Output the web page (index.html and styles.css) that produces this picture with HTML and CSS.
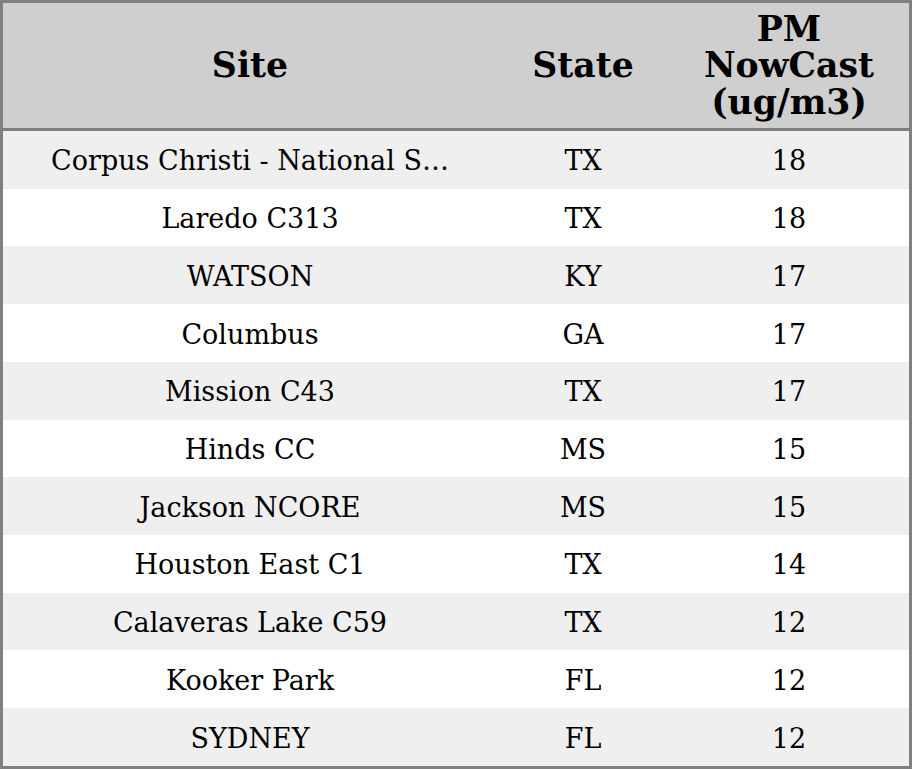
FILE: index.html
```html
<!DOCTYPE html>
<html>
<head>
<meta charset="utf-8">
<link rel="stylesheet" href="styles.css">
</head>
<body>
<table class="aq-table">
  <colgroup>
    <col class="col-site">
    <col class="col-state">
    <col class="col-pm">
  </colgroup>
  <thead>
    <tr class="head-row">
      <th>Site</th>
      <th>State</th>
      <th>PM<br>NowCast<br>(ug/m3)</th>
    </tr>
  </thead>
  <tbody>
    <tr class="row odd"><td class="site">Corpus Christi - National S…</td><td>TX</td><td>18</td></tr>
    <tr class="row"><td class="site">Laredo C313</td><td>TX</td><td>18</td></tr>
    <tr class="row odd"><td class="site">WATSON</td><td>KY</td><td>17</td></tr>
    <tr class="row"><td class="site">Columbus</td><td>GA</td><td>17</td></tr>
    <tr class="row odd"><td class="site">Mission C43</td><td>TX</td><td>17</td></tr>
    <tr class="row"><td class="site">Hinds CC</td><td>MS</td><td>15</td></tr>
    <tr class="row odd"><td class="site">Jackson NCORE</td><td>MS</td><td>15</td></tr>
    <tr class="row"><td class="site">Houston East C1</td><td>TX</td><td>14</td></tr>
    <tr class="row odd"><td class="site">Calaveras Lake C59</td><td>TX</td><td>12</td></tr>
    <tr class="row"><td class="site">Kooker Park</td><td>FL</td><td>12</td></tr>
    <tr class="row odd"><td class="site">SYDNEY</td><td>FL</td><td>12</td></tr>
  </tbody>
</table>
</body>
</html>
```
FILE: styles.css
```css
html, body {
  margin: 0;
  padding: 0;
  background: #ffffff;
}
.aq-table {
  width: 912px;
  height: 769px;
  table-layout: fixed;
  border-collapse: separate;
  border-spacing: 0;
  border: 3px solid #808080;
  font-family: "DejaVu Serif", serif;
  color: #000000;
}
.col-site { width: 494px; }
.col-state { width: 172px; }
.col-pm { width: 240px; }
.head-row th {
  height: 125px;
  padding: 0;
  background: #cfcfcf;
  border-bottom: 3px solid #808080;
  font-size: 34.67px;
  line-height: 36.5px;
  font-weight: bold;
  text-align: center;
  vertical-align: middle;
}
.row td {
  height: 55.7px;
  padding: 2px 0 0;
  font-size: 27px;
  text-align: center;
  vertical-align: middle;
  white-space: nowrap;
  background: #ffffff;
}
.row.odd td {
  background: #efefef;
}
.row td.site {
  overflow: hidden;
  text-overflow: ellipsis;
}
```
